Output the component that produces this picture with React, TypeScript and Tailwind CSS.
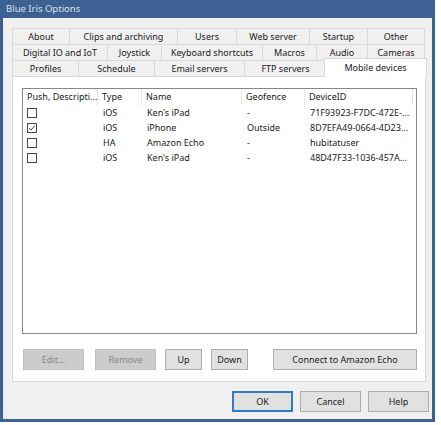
import React from 'react';

const font = { fontFamily: '"Noto Sans", "Open Sans", sans-serif' };

type Tab = { label: string; w: string; selected?: boolean };

const tabRows: Tab[][] = [
  [
    { label: 'About', w: 'w-[57px]' },
    { label: 'Clips and archiving', w: 'w-[108px]' },
    { label: 'Users', w: 'w-[59px]' },
    { label: 'Web server', w: 'w-[73px]' },
    { label: 'Startup', w: 'w-[58px]' },
    { label: 'Other', w: 'w-[58px]' },
  ],
  [
    { label: 'Digital IO and IoT', w: 'w-[95px]' },
    { label: 'Joystick', w: 'w-[54px]' },
    { label: 'Keyboard shortcuts', w: 'w-[101px]' },
    { label: 'Macros', w: 'w-[54px]' },
    { label: 'Audio', w: 'w-[51px]' },
    { label: 'Cameras', w: 'w-[58px]' },
  ],
  [
    { label: 'Profiles', w: 'w-[66px]' },
    { label: 'Schedule', w: 'w-[76px]' },
    { label: 'Email servers', w: 'w-[90px]' },
    { label: 'FTP servers', w: 'w-[82px]' },
    { label: 'Mobile devices', w: 'w-[103px]', selected: true },
  ],
];

const devices = [
  { push: false, type: 'iOS', name: "Ken's iPad", geo: '-', id: '71F93923-F7DC-472E-...' },
  { push: true, type: 'iOS', name: 'iPhone', geo: 'Outside', id: '8D7EFA49-0664-4D23...' },
  { push: false, type: 'HA', name: 'Amazon Echo', geo: '-', id: 'hubitatuser' },
  { push: false, type: 'iOS', name: "Ken's iPad", geo: '-', id: '48D47F33-1036-457A...' },
];

const Checkbox = ({ checked }: { checked: boolean }) => (
  <span className="w-[10px] h-[10px] border border-[#444444] bg-white flex items-center justify-center">
    {checked && (
      <svg width="8" height="8" viewBox="0 0 8 8">
        <polyline points="1,4 3,6 7,1.5" fill="none" stroke="#444444" strokeWidth="1" />
      </svg>
    )}
  </span>
);

const Button = ({ label, w, disabled, primary }: { label: string; w: string; disabled?: boolean; primary?: boolean }) => (
  <div
    className={`${w} h-[21px] flex items-center justify-center whitespace-nowrap text-[9px] ${
      disabled
        ? 'bg-[#cccccc] border border-[#bfbfbf] text-[#8a8a8a]'
        : primary
        ? 'bg-[#e1e1e1] border-2 border-[#2f7cc4] text-[#1a1a1a]'
        : 'bg-[#e1e1e1] border border-[#adadad] text-[#1a1a1a]'
    }`}
  >
    {label}
  </div>
);

const App = () => (
  <div className="w-[441px] h-[425px] bg-white" style={font}>
    <div className="w-[435px] h-[422px] bg-[#3d6193] px-[3px] pb-[3px] flex flex-col">
      <div className="h-[18px] flex items-center pl-[3px] text-[9.5px] text-[#d8e1ee]">Blue Iris Options</div>
      <div className="flex-1 bg-[#f0f0f0] pl-[9px] pr-[3px] pt-[10px] flex flex-col text-[#1a1a1a]">
        <div className="w-[414px] flex flex-col">
          {tabRows.map((row, i) => (
            <div key={i} className="flex h-[16px]">
              {row.map((t) =>
                t.selected ? (
                  <div
                    key={t.label}
                    className={`${t.w} relative z-10 -mx-[2px] -mt-[2px] h-[19px] bg-white border border-b-0 border-[#d9d9d9] flex items-center justify-center whitespace-nowrap text-[9px]`}
                  >
                    {t.label}
                  </div>
                ) : (
                  <div
                    key={t.label}
                    className={`${t.w} border-t border-l last:border-r border-[#d9d9d9] flex items-center justify-center whitespace-nowrap text-[9px]`}
                  >
                    {t.label}
                  </div>
                )
              )}
            </div>
          ))}
          <div className="h-[306px] bg-white border border-[#d9d9d9] pl-[9px] pr-[8px] pt-[11px] flex flex-col">
            <div className="h-[246px] border border-[#828790] bg-white text-[9px] whitespace-nowrap">
              <div className="flex h-[16px] items-center">
                <div className="w-[75px] h-full pl-[4px] flex items-center overflow-hidden border-r border-[#e5e5e5]">Push, Descripti...</div>
                <div className="w-[44px] h-full pl-[4px] flex items-center border-r border-[#e5e5e5]">Type</div>
                <div className="w-[100px] h-full pl-[4px] flex items-center border-r border-[#e5e5e5]">Name</div>
                <div className="w-[63px] h-full pl-[4px] flex items-center border-r border-[#e5e5e5]">Geofence</div>
                <div className="w-[108px] h-full pl-[4px] flex items-center border-r border-[#e5e5e5]">DeviceID</div>
              </div>
              {devices.map((d, i) => (
                <div key={i} className="flex h-[15px] items-center">
                  <div className="w-[75px] pl-[4px] flex items-center">
                    <Checkbox checked={d.push} />
                  </div>
                  <div className="w-[44px] pl-[5px]">{d.type}</div>
                  <div className="w-[100px] pl-[5px]">{d.name}</div>
                  <div className="w-[63px] pl-[5px]">{d.geo}</div>
                  <div className="w-[108px] pl-[5px]">{d.id}</div>
                </div>
              ))}
            </div>
            <div className="flex mt-[15px] pl-[1px]">
              <Button label="Edit..." w="w-[61px]" disabled />
              <div className="ml-[11px]">
                <Button label="Remove" w="w-[61px]" disabled />
              </div>
              <div className="ml-[9px]">
                <Button label="Up" w="w-[37px]" />
              </div>
              <div className="ml-[9px]">
                <Button label="Down" w="w-[37px]" />
              </div>
              <div className="ml-auto">
                <Button label="Connect to Amazon Echo" w="w-[144px]" />
              </div>
            </div>
          </div>
        </div>
        <div className="flex justify-end gap-[7px] mt-[9px]">
          <Button label="OK" w="w-[61px]" primary />
          <Button label="Cancel" w="w-[61px]" />
          <Button label="Help" w="w-[61px]" />
        </div>
      </div>
    </div>
  </div>
);

export default App;
